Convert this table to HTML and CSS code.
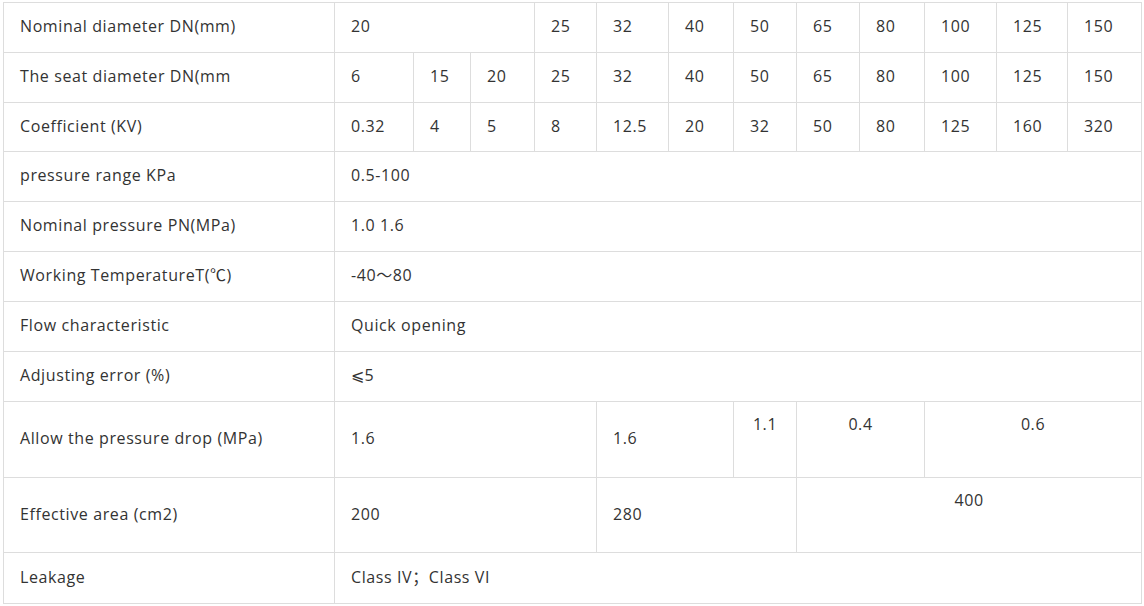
FILE: index.html
```html
<!DOCTYPE html>
<html>
<head>
<meta charset="utf-8">
<link rel="stylesheet" href="styles.css">
</head>
<body>
<div class="wrap">
<table class="spec">
<colgroup>
<col class="c1"><col class="c2"><col class="c3"><col class="c4"><col class="c5"><col class="c6"><col class="c7"><col class="c8"><col class="c9"><col class="c10"><col class="c11"><col class="c12"><col class="c13">
</colgroup>
<tbody>
<tr><td>Nominal diameter DN(mm)</td><td colspan="3">20</td><td>25</td><td>32</td><td>40</td><td>50</td><td>65</td><td>80</td><td>100</td><td>125</td><td>150</td></tr>
<tr><td>The seat diameter DN(mm</td><td>6</td><td>15</td><td>20</td><td>25</td><td>32</td><td>40</td><td>50</td><td>65</td><td>80</td><td>100</td><td>125</td><td>150</td></tr>
<tr class="short"><td>Coefficient (KV)</td><td>0.32</td><td>4</td><td>5</td><td>8</td><td>12.5</td><td>20</td><td>32</td><td>50</td><td>80</td><td>125</td><td>160</td><td>320</td></tr>
<tr><td>pressure range KPa</td><td colspan="12">0.5-100</td></tr>
<tr><td>Nominal pressure PN(MPa)</td><td colspan="12">1.0 1.6</td></tr>
<tr><td>Working TemperatureT(℃)</td><td colspan="12">-40～80</td></tr>
<tr><td>Flow characteristic</td><td colspan="12">Quick opening</td></tr>
<tr><td>Adjusting error (%)</td><td colspan="12">⩽5</td></tr>
<tr class="tall"><td>Allow the pressure drop (MPa)</td><td colspan="4">1.6</td><td colspan="2">1.6</td><td class="top">1.1</td><td colspan="2" class="top">0.4</td><td colspan="3" class="top">0.6</td></tr>
<tr class="tall2"><td>Effective area (cm2)</td><td colspan="4">200</td><td colspan="3">280</td><td colspan="5" class="top">400</td></tr>
<tr class="last"><td>Leakage</td><td colspan="12">Class IV；Class VI</td></tr>
</tbody>
</table>
</div>
</body>
</html>
```
FILE: styles.css
```css
html, body {
  margin: 0;
  padding: 0;
  background: #fff;
}
.wrap {
  padding: 2px 2px 2px 3px;
}
.spec {
  border-collapse: collapse;
  table-layout: fixed;
  width: 1139px;
  font-family: "Open Sans", "Noto Sans CJK SC", sans-serif;
  font-size: 16px;
  letter-spacing: 0.6px;
  color: #333;
}
.spec td {
  border: 1px solid #ddd;
  padding: 0 0 3px 16px;
  height: 46px;
  line-height: 22px;
  vertical-align: middle;
  white-space: nowrap;
  overflow: hidden;
}
.spec tr.short td { height: 45px; }
.spec td.top {
  vertical-align: top;
  text-align: center;
  padding: 11px 0 0 0;
}
.spec tr.tall td { height: 72px; }
.spec tr.tall td.top { height: 64px; }
.spec tr.tall2 td { height: 71px; }
.spec tr.tall2 td.top { height: 63px; }
.spec tr.last td { height: 47px; }
.c1 { width: 331px; }
.c2 { width: 79px; }
.c3 { width: 57px; }
.c4 { width: 64px; }
.c5 { width: 62px; }
.c6 { width: 72px; }
.c7 { width: 65px; }
.c8 { width: 63px; }
.c9 { width: 63px; }
.c10 { width: 65px; }
.c11 { width: 72px; }
.c12 { width: 71px; }
.c13 { width: 74px; }
```
